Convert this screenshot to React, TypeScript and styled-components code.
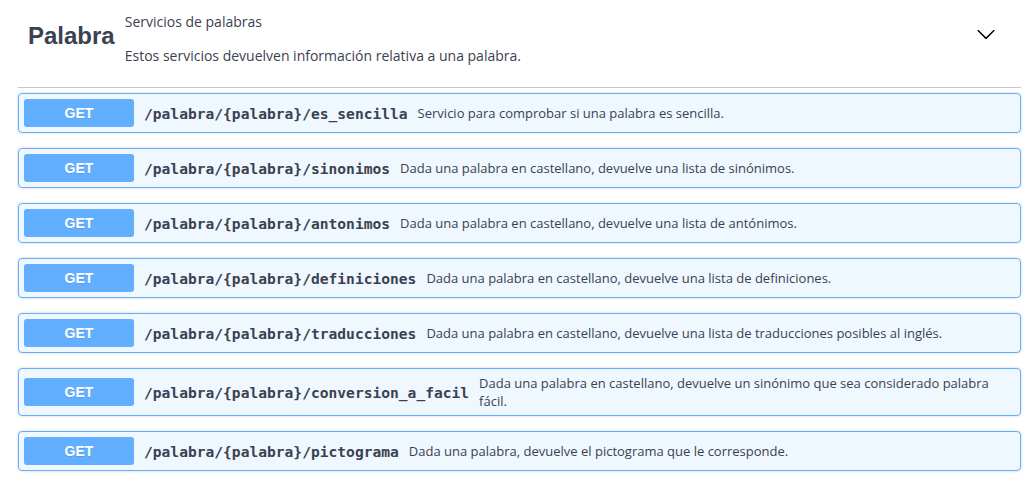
import styled, { createGlobalStyle } from "styled-components";

const GlobalStyle = createGlobalStyle`
  html, body {
    margin: 0;
    padding: 0;
    background: #fff;
  }
  body {
    font-family: "Open Sans", "Liberation Sans", sans-serif;
    color: #3b4151;
  }
`;

const Wrapper = styled.div`
  width: 1003px;
  padding-left: 18px;
`;

const TagHeader = styled.div`
  display: flex;
  align-items: center;
  padding: 12px 20px 22px 10px;
  margin-bottom: 5px;
  border-bottom: 1px solid rgba(59, 65, 81, 0.3);
`;

const TagTitle = styled.h3`
  margin: 0;
  padding-bottom: 5px;
  font-family: "Liberation Sans", Arial, sans-serif;
  font-size: 24px;
  font-weight: 700;
  color: #3b4151;
`;

const TagInfo = styled.div`
  flex: 1;
  padding: 0 10px;
  font-size: 14px;
  line-height: 19px;
`;

const TagLine = styled.p<{ $gap?: boolean }>`
  margin: ${(p) => (p.$gap ? "15px 0 0" : "0")};
`;

const ExpandButton = styled.button`
  display: flex;
  align-items: center;
  border: none;
  background: none;
  padding: 0;
  margin: 0 5px 0 0;
  align-self: flex-start;
  margin-top: 12px;
  color: #000;
`;

const Block = styled.div`
  display: flex;
  align-items: center;
  padding: 5px;
  margin-bottom: 15px;
  border: 1px solid #61affe;
  border-radius: 4px;
  background: rgba(97, 175, 254, 0.1);
  box-shadow: 0 0 3px rgba(0, 0, 0, 0.19);
`;

const Method = styled.span`
  flex-shrink: 0;
  min-width: 80px;
  padding: 6px 15px;
  border-radius: 3px;
  background: #61affe;
  color: #fff;
  font-family: "Liberation Sans", Arial, sans-serif;
  font-size: 14px;
  font-weight: 700;
  line-height: 16px;
  text-align: center;
  text-shadow: 0 1px 0 rgba(0, 0, 0, 0.1);
`;

const Path = styled.span`
  flex-shrink: 0;
  padding: 0 10px;
  font-family: "DejaVu Sans Mono", "Liberation Mono", monospace;
  font-size: 14.6px;
  font-weight: 700;
  color: #3b4151;
`;

const Description = styled.div`
  flex: 1 1 auto;
  font-size: 13px;
  color: #3b4151;
  word-break: break-word;
`;

const ops = [
  ["es_sencilla", "Servicio para comprobar si una palabra es sencilla."],
  ["sinonimos", "Dada una palabra en castellano, devuelve una lista de sinónimos."],
  ["antonimos", "Dada una palabra en castellano, devuelve una lista de antónimos."],
  ["definiciones", "Dada una palabra en castellano, devuelve una lista de definiciones."],
  [
    "traducciones",
    "Dada una palabra en castellano, devuelve una lista de traducciones posibles al inglés.",
  ],
  [
    "conversion_a_facil",
    "Dada una palabra en castellano, devuelve un sinónimo que sea considerado palabra fácil.",
  ],
  ["pictograma", "Dada una palabra, devuelve el pictograma que le corresponde."],
];

export default function App() {
  return (
    <>
      <GlobalStyle />
      <Wrapper>
        <TagHeader>
          <TagTitle>Palabra</TagTitle>
          <TagInfo>
            <TagLine>Servicios de palabras</TagLine>
            <TagLine $gap>Estos servicios devuelven información relativa a una palabra.</TagLine>
          </TagInfo>
          <ExpandButton>
            <svg width="20" height="20" viewBox="0 0 20 20" fill="currentColor">
              <path d="M17.418 6.109c.272-.268.709-.268.979 0s.271.701 0 .969l-7.908 7.83c-.27.268-.707.268-.979 0l-7.908-7.83c-.27-.268-.27-.701 0-.969.271-.268.709-.268.979 0L10 13.25l7.418-7.141z" />
            </svg>
          </ExpandButton>
        </TagHeader>
        {ops.map(([name, desc]) => (
          <Block key={name}>
            <Method>GET</Method>
            <Path>/palabra/{"{palabra}"}/{name}</Path>
            <Description>{desc}</Description>
          </Block>
        ))}
      </Wrapper>
    </>
  );
}
